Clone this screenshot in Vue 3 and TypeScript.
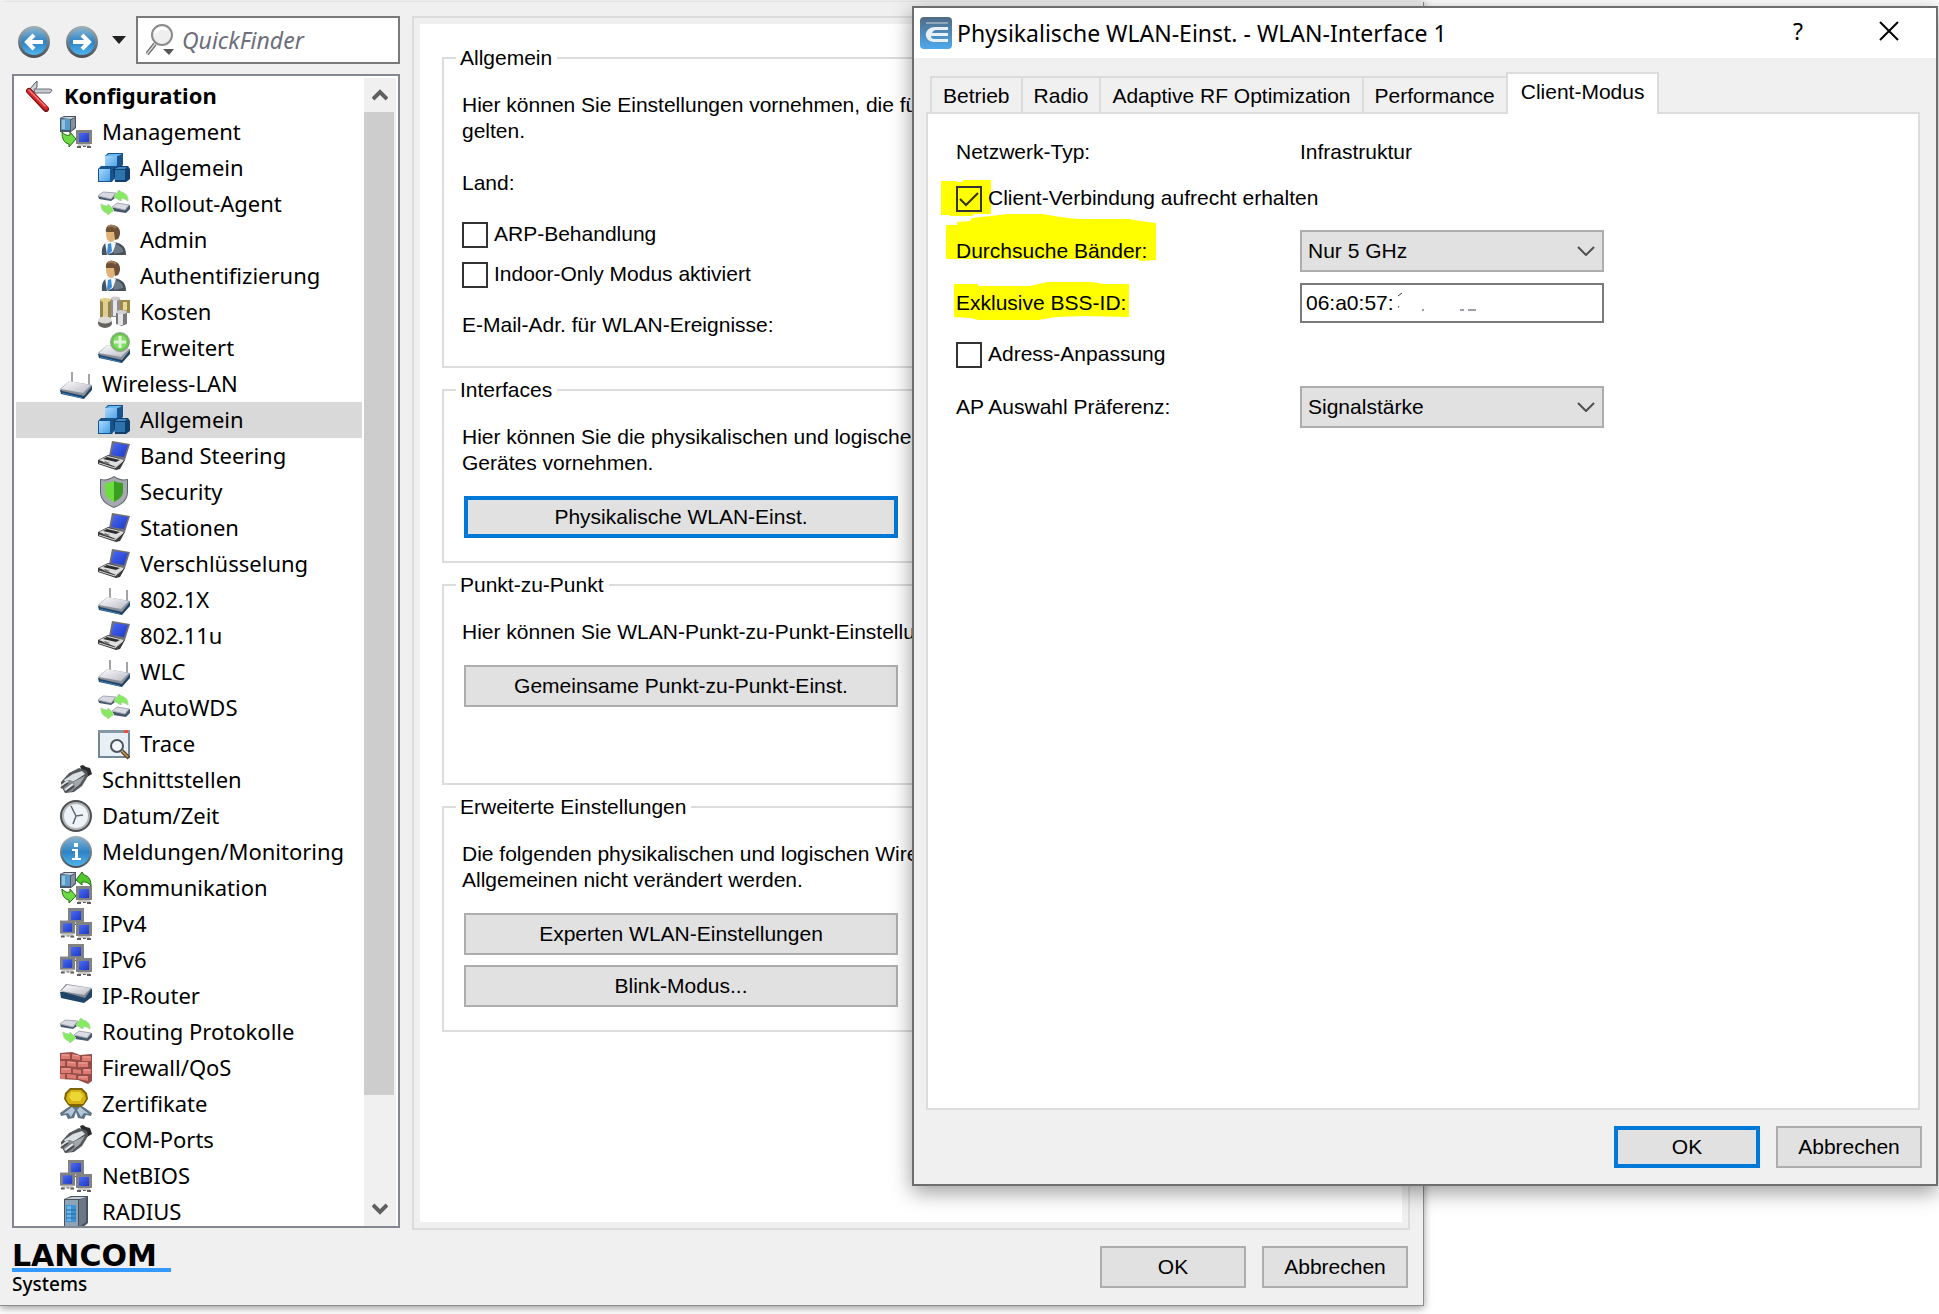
<script setup lang="ts">
import { ref } from 'vue'

interface TreeItem {
  label: string
  icon: string
  level: number
}

const items: TreeItem[] = [
  { label: 'Konfiguration', icon: 'knife', level: 0 },
  { label: 'Management', icon: 'management', level: 1 },
  { label: 'Allgemein', icon: 'cubes', level: 2 },
  { label: 'Rollout-Agent', icon: 'routing', level: 2 },
  { label: 'Admin', icon: 'person', level: 2 },
  { label: 'Authentifizierung', icon: 'person', level: 2 },
  { label: 'Kosten', icon: 'coins', level: 2 },
  { label: 'Erweitert', icon: 'extended', level: 2 },
  { label: 'Wireless-LAN', icon: 'wlan', level: 1 },
  { label: 'Allgemein', icon: 'cubes', level: 2 },
  { label: 'Band Steering', icon: 'laptop', level: 2 },
  { label: 'Security', icon: 'shield', level: 2 },
  { label: 'Stationen', icon: 'laptop', level: 2 },
  { label: 'Verschlüsselung', icon: 'laptop', level: 2 },
  { label: '802.1X', icon: 'wlan', level: 2 },
  { label: '802.11u', icon: 'laptop', level: 2 },
  { label: 'WLC', icon: 'wlan', level: 2 },
  { label: 'AutoWDS', icon: 'routing', level: 2 },
  { label: 'Trace', icon: 'trace', level: 2 },
  { label: 'Schnittstellen', icon: 'plug', level: 1 },
  { label: 'Datum/Zeit', icon: 'clock', level: 1 },
  { label: 'Meldungen/Monitoring', icon: 'info', level: 1 },
  { label: 'Kommunikation', icon: 'communication', level: 1 },
  { label: 'IPv4', icon: 'network', level: 1 },
  { label: 'IPv6', icon: 'network', level: 1 },
  { label: 'IP-Router', icon: 'router', level: 1 },
  { label: 'Routing Protokolle', icon: 'routing', level: 1 },
  { label: 'Firewall/QoS', icon: 'wall', level: 1 },
  { label: 'Zertifikate', icon: 'seal', level: 1 },
  { label: 'COM-Ports', icon: 'plug', level: 1 },
  { label: 'NetBIOS', icon: 'network', level: 1 },
  { label: 'RADIUS', icon: 'server', level: 1 },
]

const selected = ref(9)
const search = ref('')

const tabs = ['Betrieb', 'Radio', 'Adaptive RF Optimization', 'Performance', 'Client-Modus']
const activeTab = ref(4)

const arp = ref(false)
const indoor = ref(false)
const keepAlive = ref(true)
const adapt = ref(false)
const band = ref('Nur 5 GHz')
const bssid = ref('06:a0:57:')
const preference = ref('Signalstärke')
</script>

<template>
  <div class="desktop">
    <svg class="sprites" width="0" height="0" aria-hidden="true">
      <defs>
        <linearGradient id="gBlue" x1="0" y1="0" x2="0" y2="1">
          <stop offset="0" stop-color="#7fb0d2" /><stop offset=".5" stop-color="#2f83c4" /><stop offset="1" stop-color="#4fb4ee" />
        </linearGradient>
        <linearGradient id="gRim" x1="0" y1="0" x2="0" y2="1">
          <stop offset="0" stop-color="#9db0ba" /><stop offset="1" stop-color="#4a4f55" />
        </linearGradient>
        <linearGradient id="gCube" x1="0" y1="0" x2="1" y2="1">
          <stop offset="0" stop-color="#a8d9ff" /><stop offset="1" stop-color="#4a9fe4" />
        </linearGradient>
        <linearGradient id="gScreen" x1="0" y1="0" x2="1" y2="1">
          <stop offset="0" stop-color="#4a6cf2" /><stop offset="1" stop-color="#1e38c8" />
        </linearGradient>
        <linearGradient id="gMetal" x1="0" y1="0" x2="1" y2="1">
          <stop offset="0" stop-color="#ffffff" /><stop offset="1" stop-color="#b9b9c4" />
        </linearGradient>
        <linearGradient id="gLogo" x1="0" y1="0" x2="0" y2="1">
          <stop offset="0" stop-color="#4f6b84" /><stop offset="1" stop-color="#4fa9ee" />
        </linearGradient>
        <symbol id="i-knife" viewBox="0 0 32 32">
          <path d="M4 9 9 3l2-2v6L8 12z" fill="#cfd3d8" stroke="#55585e" />
          <path d="M8 9h16l2 1-2 3H9z" fill="#c6cad0" stroke="#6d7178" />
          <path d="M3 11 20 29" stroke="#7a1114" stroke-width="6" stroke-linecap="round" />
          <path d="M3 11 20 28" stroke="#d8272d" stroke-width="4" stroke-linecap="round" />
          <path d="M3 10 19 26" stroke="#f27c7c" stroke-width="1.500" stroke-linecap="round" />
        </symbol>
        <symbol id="p-tower" viewBox="0 0 16 16">
          <path d="M0 2 4 0h12v12l-5 4H0z" fill="#4b5565" />
          <path d="M1 3h9v11H1z" fill="#5a9cc8" /><path d="M2 4h3v9H2z" fill="#8fc1e0" />
          <path d="m1 2 4-1h10l-4 2z" fill="#c9d2da" /><path d="m11 4 4-2v9l-4 4z" fill="#8591a0" />
        </symbol>
        <symbol id="p-monitor" viewBox="0 0 16 18">
          <rect width="16" height="14" fill="#828282" /><rect x="3" y="3" width="10" height="9" fill="url(#gScreen)" />
          <path d="M2 14h12v2H2z" fill="#c8c8c8" /><path d="M1 16h4v2H1zM7 16h3v1H7zM11 16h4v2h-4z" fill="#5d5d5d" />
        </symbol>
        <symbol id="i-management" viewBox="0 0 32 32">
          <use href="#p-tower" width="16" height="16" />
          <path d="M2 16c3 3 5 4 8 3v-3l6 7-7 8v-3c-5-1-7-5-7-12z" fill="#6ddb45" stroke="#226c11" />
          <use href="#p-monitor" x="16" y="14" width="16" height="18" />
        </symbol>
        <symbol id="i-communication" viewBox="0 0 32 32">
          <use href="#p-tower" width="16" height="16" />
          <path d="m16 8 6-8 2 3c5 1 7 5 7 11-3-4-5-4-9-4v3z" fill="#51c62e" stroke="#226c11" />
          <path d="M2 17c3 3 5 4 8 3v-3l6 7-7 7v-3c-5-1-7-5-7-11z" fill="#6ddb45" stroke="#226c11" />
          <use href="#p-monitor" x="16" y="14" width="16" height="18" />
        </symbol>
        <symbol id="i-cubes" viewBox="0 0 32 32">
          <path d="m7 4 3-3h15v12l-4 4H7z" fill="#17548d" /><path d="M7 4h12v12H7z" fill="url(#gCube)" /><path d="m8 4 3-2h13l-4 2z" fill="#6cb6ee" />
          <path d="m0 17 3-3h14v12l-3 4H0z" fill="#17548d" /><path d="M1 17h11v12H1z" fill="url(#gCube)" />
          <path d="m15 17 3-3h12l2 3v10l-4 3H17z" fill="#123f6c" /><path d="M17 18h10v10H17z" fill="#2d73ae" /><path d="m17 17 3-2h9l-2 2z" fill="#3f87c4" />
        </symbol>
        <symbol id="i-routing" viewBox="0 0 32 32">
          <path d="m0 8 1 3 12 2 4-3V6z" fill="#47586c" /><path d="m0 8 5-4 13 1-5 6z" fill="#d9d9e1" stroke="#a5a9b2" />
          <path d="m14 20 1 3 13 2 4-4v-4z" fill="#47586c" /><path d="m14 19 5-4 12 2-4 5z" fill="#dcdce4" stroke="#a5a9b2" />
          <path d="m16 9 5-7 2 2c5 1 7 4 7 9-3-2-5-3-7-2v2z" fill="#84ea5f" stroke="#a5d896" />
          <path d="M3 16c3 2 5 2 7 2v-2l6 6-6 5-1-2c-4-1-6-4-6-9z" fill="#84ea5f" stroke="#a5d896" />
        </symbol>
        <symbol id="i-person" viewBox="0 0 32 32">
          <path d="M4 31c-1-8 2-13 8-14l8 2c6 2 8 6 8 12z" fill="#47525e" />
          <path d="M16 20c6 1 9 4 9 8l-9 2z" fill="#6e7a86" />
          <path d="m7 18 6-2 5 3-3 9-6 3z" fill="#f4f7fa" /><path d="m10 20 3-1 1 8-4 4-1-2z" fill="#3d8bd2" />
          <ellipse cx="13" cy="10" rx="5" ry="8" fill="#dfb377" /><path d="M8 8C7 2 12-1 18 2c5 2 5 9 2 13l-3 1-1-8c-4 0-6 0-8 0z" fill="#6d5036" />
          <path d="M10 3c3-2 6-1 8 1" stroke="#a07d58" stroke-width="2" fill="none" />
        </symbol>
        <symbol id="i-coins" viewBox="0 0 32 32">
          <path d="M2 3h11v22H2z" fill="#95854a" /><path d="M5 5h5v18H5z" fill="#ddcf93" /><ellipse cx="7.500" cy="4" rx="5.500" ry="2" fill="#e0cf85" />
          <path d="M22 4h10v13H22z" fill="#9d8a49" /><path d="M25 6h4v8h-4z" fill="#e6d89a" />
          <path d="M13 2h9v19h-9z" fill="#8f8f93" /><path d="M15 4h4v16h-4z" fill="#e7e7ea" /><ellipse cx="17.500" cy="2.500" rx="4.500" ry="2" fill="#cbcbcf" />
          <path d="M18 17h11v11l-5 2-6-2z" fill="#77777c" /><path d="M20 16h5v13h-5z" fill="#e4e4e7" /><ellipse cx="23.500" cy="16" rx="5.500" ry="2" fill="#d2d2d6" />
          <ellipse cx="7" cy="27" rx="7" ry="5" fill="#66635f" /><ellipse cx="7" cy="24" rx="7" ry="3.500" fill="#dedcd9" />
        </symbol>
        <symbol id="p-box" viewBox="0 0 32 18">
          <path d="m0 9 1 4 23 5 8-9V5z" fill="#1f4468" /><path d="m0 8 2 2 22 5 8-10V4L9 0z" fill="#8a9099" /><path d="M1 8 9 0l22 4-8 8z" fill="url(#gMetal)" />
          <path d="m2 12 20 5" stroke="#3f82bd" />
        </symbol>
        <symbol id="i-extended" viewBox="0 0 32 32">
          <use href="#p-box" y="13" width="32" height="18" />
          <circle cx="22" cy="10" r="9.500" fill="#6cc254" stroke="#94a591" /><circle cx="22" cy="10" r="7" fill="#83de66" /><path d="M22 4v12M16 10h12" stroke="#dff5d6" stroke-width="3" />
        </symbol>
        <symbol id="i-wlan" viewBox="0 0 32 32">
          <path d="M12 4v14M29 6v13" stroke="#a3a3a8" stroke-width="2" />
          <use href="#p-box" y="13" width="32" height="18" />
        </symbol>
        <symbol id="i-router" viewBox="0 0 32 32">
          <path d="m0 12 1 6 23 5 8-6V9z" fill="#1f4468" /><path d="m0 11 6-7 26 4-7 10z" fill="#858a92" /><path d="m1 11 6-6 24 3-7 7z" fill="url(#gMetal)" />
        </symbol>
        <symbol id="i-laptop" viewBox="0 0 32 32">
          <path d="m14 1 18 3-5 16-16-4z" fill="#6f6f74" /><path d="m16 3 14 2-4 12-13-2z" fill="url(#gScreen)" />
          <path d="m0 20 10-5 17 5-5 9-4 1-18-6z" fill="#3a3a3d" /><path d="m1 20 9-4 16 4-8 7z" fill="#dededf" /><path d="m9 17 13 3-4 2-13-3z" fill="#2d2d30" /><path d="m7 21 5 2-2 1-5-1z" fill="#777" /><path d="m1 23 16 5 8-7" fill="none" stroke="#d7d7d7" />
        </symbol>
        <symbol id="i-shield" viewBox="0 0 32 32">
          <path d="M2 3c6 1 9 0 14-3 5 3 8 4 14 3v13c0 8-6 13-14 16C8 29 2 24 2 16z" fill="#5c6166" />
          <path d="M3 4c6 1 8 0 13-3 5 3 7 4 13 3v12c0 7-5 12-13 15C8 28 3 23 3 16z" fill="#a4aaaf" />
          <path d="M7 7c4 0 6-1 9-2v21c-6-3-9-6-9-11z" fill="#6bdd3c" /><path d="M25 7c-4 0-6-1-9-2v21c6-3 9-6 9-11z" fill="#3b9c22" />
        </symbol>
        <symbol id="i-trace" viewBox="0 0 32 32">
          <rect x="1" y="3" width="30" height="26" fill="#e9f0f5" stroke="#718798" stroke-width="2" /><path d="M0 2h32v3H0z" fill="#8397a6" /><path d="M26 2h4v3h-4z" fill="#e4523a" />
          <circle cx="19" cy="18" r="6" fill="#f4f8fb" stroke="#4a555e" stroke-width="2" /><path d="m24 23 7 7" stroke="#5e452a" stroke-width="4" /><path d="m24 23 6 6" stroke="#c39a5d" stroke-width="1.500" />
        </symbol>
        <symbol id="i-plug" viewBox="0 0 32 32">
          <path d="m20 2 3-1 3 2 4 1 2 6-5 3-5-5z" fill="#2b2b2b" />
          <path d="m1 18 8-9 10-5 8 3 1 5-6 10-8 6-9 1-4-7z" fill="#55595d" /><path d="m4 16 9-6 9-3 3 3-9 6-9 4z" fill="#dde0e2" /><path d="m13 18 12-6-5 8-6 5z" fill="#a3a8ad" />
          <ellipse cx="9" cy="22" rx="6" ry="6" fill="#83898f" /><path d="m1 22 7-5M5 26l8-6" stroke="#e3e6e8" stroke-width="2" /><path d="m1 24 7-5M6 28l8-6" stroke="#4a4d50" stroke-width="2" />
        </symbol>
        <symbol id="i-clock" viewBox="0 0 32 32">
          <circle cx="16" cy="16" r="15" fill="#b3b6b9" stroke="#4c4f52" stroke-width="2" /><circle cx="16" cy="16" r="12" fill="#eef3f8" />
          <path d="m11 6 5 10 7-1M16 16l-3 8" stroke="#5f656b" stroke-width="1.500" fill="none" />
        </symbol>
        <symbol id="i-info" viewBox="0 0 32 32">
          <circle cx="16" cy="16" r="16" fill="url(#gRim)" /><circle cx="16" cy="16" r="14" fill="url(#gBlue)" />
          <path d="M14 7h4v4h-4zM12 13h6v9h3v2h-9v-2h3v-7h-3z" fill="#fff" />
        </symbol>
        <symbol id="i-network" viewBox="0 0 32 32">
          <use href="#p-monitor" x="8" y="0" width="16" height="18" /><use href="#p-monitor" x="0" y="12" width="15" height="18" /><use href="#p-monitor" x="16" y="14" width="16" height="18" />
        </symbol>
        <symbol id="i-wall" viewBox="0 0 32 32">
          <path d="m0 1 12-1 8 3 12-1v27l-4 3-10-4-18-1z" fill="#944d47" />
          <path d="M1 2h9v5H1zM12 2l8 2v4l-8-1zM22 4h9v5h-9zM0 9h5v5H0zM7 9l9 1v5l-9-1zM18 10h10v5H18zM1 16h10v5H1zM13 17l8 1v4l-8-1zM23 17h8v5h-8zM0 22h5v5H0zM7 22l9 1v4l-9-1zM18 24h10v5l-10-2z" fill="#dd7a71" />
          <path d="M2 3h7M13 3l6 1M23 5h7M8 10l7 1M19 11h8M2 17h8M24 18h6M19 25h8" stroke="#f1a59c" />
        </symbol>
        <symbol id="i-seal" viewBox="0 0 32 32">
          <path d="m12 17-5 3-7 5 1 3 5-1 2 4 6-1 2-6 2 6 6 1 2-4 5 1 1-3-7-5-5-3z" fill="#5f7486" /><path d="m12 19-9 7 5-1 3 4 4-7zM20 19l9 7-5-1-3 4-4-7z" fill="#b5c8da" />
          <path d="M10 0h12l5 5 1 6-4 6-3 2H11l-3-2-4-6 1-6z" fill="#7b6505" /><path d="M11 2h10l4 4 1 5-3 5H9l-3-5 1-5z" fill="#d8b315" /><path d="M11 4h9l3 4-3 5h-8L9 9z" fill="#ecd635" />
        </symbol>
        <symbol id="i-server" viewBox="0 0 32 32">
          <path d="m4 3 7-3h17v27l-6 5H4z" fill="#48525f" /><path d="M5 4h13v27H5z" fill="#8ea4b6" /><path d="M6 9h10v17H6z" fill="#3b93d4" /><path d="M7 10h4v15H7z" fill="#6cb6e8" /><path d="M6 14h10M6 18h10M6 22h10" stroke="#286a9e" />
          <path d="m5 3 7-2h15l-7 2z" fill="#c3ccd5" /><path d="m19 4 7-3v25l-7 5z" fill="#6b7786" />
        </symbol>
      </defs>
    </svg>

    <main class="window">
      <div class="body">
        <aside class="side">
          <div class="toolbar">
            <button class="nav" type="button" aria-label="Zurück">
              <svg viewBox="0 0 32 32"><circle cx="16" cy="16" r="16" fill="url(#gRim)" /><circle cx="16" cy="16" r="13" fill="url(#gBlue)" /><path d="M25 16H9M16 9l-7 7 7 7" fill="none" stroke="#fff" stroke-width="4" /></svg>
            </button>
            <button class="nav" type="button" aria-label="Vor">
              <svg viewBox="0 0 32 32"><circle cx="16" cy="16" r="16" fill="url(#gRim)" /><circle cx="16" cy="16" r="13" fill="url(#gBlue)" /><path d="M7 16h16M16 9l7 7-7 7" fill="none" stroke="#fff" stroke-width="4" /></svg>
            </button>
            <button class="more" type="button" aria-label="Verlauf">
              <svg viewBox="0 0 14 8"><path d="M0 0h14L7 8z" fill="#222" /></svg>
            </button>
            <div class="search">
              <svg viewBox="0 0 28 32"><path d="M9 20 1 30" stroke="#6a6a6a" stroke-width="4" /><path d="M9 20 1 30" stroke="#d8d8d8" stroke-width="1.500" /><circle cx="16" cy="11" r="10" fill="#efefef" stroke="#8b8b8b" stroke-width="2" /><path d="M9 9c2-5 8-6 12-3" stroke="#fff" stroke-width="3" fill="none" /><path d="M17 25h11l-5 6z" fill="#555" /></svg>
              <input v-model="search" type="text" placeholder="QuickFinder" aria-label="QuickFinder">
            </div>
          </div>
          <div class="tree">
            <ul>
              <li v-for="(item, i) in items" :key="i" :class="['row', 'level' + item.level, { selected: i === selected }]" @click="selected = i">
                <svg class="icon"><use :href="'#i-' + item.icon" /></svg>
                <span>{{ item.label }}</span>
              </li>
            </ul>
            <div class="scroll">
              <svg class="arrow" viewBox="0 0 16 12"><path d="m1 10 7-7 7 7" fill="none" stroke="#606060" stroke-width="4" /></svg>
              <div class="track"><div class="thumb"></div></div>
              <svg class="arrow" viewBox="0 0 16 12"><path d="m1 2 7 7 7-7" fill="none" stroke="#606060" stroke-width="4" /></svg>
            </div>
          </div>
        </aside>

        <section class="pane">
          <fieldset class="general">
            <legend>Allgemein</legend>
            <p>Hier können Sie Einstellungen vornehmen, die für<br>gelten.</p>
            <p class="land">Land:</p>
            <label class="check"><input v-model="arp" type="checkbox"><span>ARP-Behandlung</span></label>
            <label class="check"><input v-model="indoor" type="checkbox"><span>Indoor-Only Modus aktiviert</span></label>
            <p class="mail">E-Mail-Adr. für WLAN-Ereignisse:</p>
          </fieldset>
          <fieldset>
            <legend>Interfaces</legend>
            <p>Hier können Sie die physikalischen und logischen<br>Gerätes vornehmen.</p>
            <button class="btn wide primary" type="button">Physikalische WLAN-Einst.</button>
          </fieldset>
          <fieldset class="p2p">
            <legend>Punkt-zu-Punkt</legend>
            <p>Hier können Sie WLAN-Punkt-zu-Punkt-Einstellungen</p>
            <button class="btn wide" type="button">Gemeinsame Punkt-zu-Punkt-Einst.</button>
          </fieldset>
          <fieldset>
            <legend>Erweiterte Einstellungen</legend>
            <p>Die folgenden physikalischen und logischen Wireless<br>Allgemeinen nicht verändert werden.</p>
            <button class="btn wide" type="button">Experten WLAN-Einstellungen</button>
            <button class="btn wide" type="button">Blink-Modus...</button>
          </fieldset>
        </section>
      </div>

      <footer class="footer">
        <div class="brand">
          <strong>LANCOM</strong>
          <span>Systems</span>
        </div>
        <div class="actions">
          <button class="btn" type="button">OK</button>
          <button class="btn" type="button">Abbrechen</button>
        </div>
      </footer>
    </main>

    <div class="dialog" role="dialog" aria-labelledby="dialog-title">
      <header class="titlebar">
        <svg class="app" viewBox="0 0 32 32"><rect width="32" height="32" rx="4" fill="url(#gLogo)" /><path d="M6 6h22" stroke="#8fa5b8" stroke-width="2" /><path d="M28 10H15c-5 0-8 3-9 6-1 5 3 9 8 9h14v-3H14c-2 0-3-1-3-3h17v-3H12c1-2 2-3 4-3h12z" fill="#e8f1f8" /></svg>
        <h1 id="dialog-title">Physikalische WLAN-Einst. - WLAN-Interface 1</h1>
        <button class="help" type="button">?</button>
        <button class="close" type="button" aria-label="Schließen">
          <svg viewBox="0 0 20 20"><path d="m1 1 18 18M19 1 1 19" stroke="#000" stroke-width="2" /></svg>
        </button>
      </header>
      <div class="tabs" role="tablist">
        <button v-for="(tab, i) in tabs" :key="tab" :class="['tab', { active: i === activeTab }]" type="button" role="tab" :aria-selected="i === activeTab" @click="activeTab = i">{{ tab }}</button>
      </div>
      <div class="sheet">
        <div class="line first"><span>Netzwerk-Typ:</span><span>Infrastruktur</span></div>
        <div class="line">
          <label class="check marked">
            <svg class="mark mark-check" viewBox="0 0 50 37"><path d="M0 1h16l1 1h4l1-2h28v34H33l-2 2H9v-1H0z" fill="#ff0" /></svg>
            <input v-model="keepAlive" type="checkbox"><span>Client-Verbindung aufrecht erhalten</span>
          </label>
        </div>
        <div class="line">
          <label class="marked" for="band">
            <svg class="mark mark-band" viewBox="0 0 210 48"><path d="M0 11h11V8l13-1 2-3 36-4h34l18 3 18 2h51l11 2 16 2v37l-16 1-2-2H0z" fill="#ff0" /></svg>
            <span>Durchsuche Bänder:</span>
          </label>
          <div class="combo">
            <select id="band" v-model="band"><option>Nur 5 GHz</option></select>
            <svg viewBox="0 0 18 10"><path d="m1 1 8 8 8-8" fill="none" stroke="#505050" stroke-width="2" /></svg>
          </div>
        </div>
        <div class="line">
          <label class="marked" for="bssid">
            <svg class="mark mark-bss" viewBox="0 0 175 38"><path d="M0 2h23l2 2h51l17-4h45l12 2h25v33l-44-1-29 1-18 3H24l-7-2-17-1z" fill="#ff0" /></svg>
            <span>Exklusive BSS-ID:</span>
          </label>
          <div class="field">
            <input id="bssid" v-model="bssid" type="text">
            <svg viewBox="0 0 90 20"><path d="m0 4 4-3M1 14l-2 3M24 18h2M62 18h4M70 18h8" stroke="#3a3a50" fill="none" /></svg>
          </div>
        </div>
        <div class="line"><label class="check"><input v-model="adapt" type="checkbox"><span>Adress-Anpassung</span></label></div>
        <div class="line">
          <label for="preference">AP Auswahl Präferenz:</label>
          <div class="combo">
            <select id="preference" v-model="preference"><option>Signalstärke</option></select>
            <svg viewBox="0 0 18 10"><path d="m1 1 8 8 8-8" fill="none" stroke="#505050" stroke-width="2" /></svg>
          </div>
        </div>
      </div>
      <div class="actions">
        <button class="btn primary" type="button">OK</button>
        <button class="btn" type="button">Abbrechen</button>
      </div>
    </div>
  </div>
</template>

<style>
body {
  margin: 0;
  background: #fff;
}
</style>

<style scoped>
* {
  box-sizing: border-box;
}

.desktop {
  position: relative;
  height: 100vh;
  min-height: 800px;
  padding: 2px 515px 8px 0;
  overflow: hidden;
  color: #000;
  font: 21px/26px "Liberation Sans", Arial, sans-serif;
}

.sprites {
  position: absolute;
}

button,
input,
select {
  font: inherit;
  color: inherit;
}

svg {
  display: block;
}

.window {
  display: flex;
  flex-direction: column;
  height: 100%;
  background: #f0f0f0;
  border-right: 1px solid #8c8c8c;
  border-bottom: 1px solid #8c8c8c;
  box-shadow: 0 2px 8px rgba(0, 0, 0, 0.4);
}

.body {
  display: flex;
  flex: 1;
  gap: 12px;
  min-height: 0;
  padding: 14px 13px 0 12px;
}

.side {
  display: flex;
  flex: none;
  flex-direction: column;
  gap: 10px;
  width: 388px;
  padding-bottom: 2px;
  font: 22px/36px "Noto Sans", "Open Sans", sans-serif;
}

.toolbar {
  display: flex;
  align-items: center;
  height: 48px;
  padding-left: 6px;
}

.nav,
.more {
  padding: 0;
  border: 0;
  background: none;
}

.nav {
  width: 32px;
  height: 32px;
  margin: 4px 16px 0 0;
}

.more {
  width: 14px;
  margin-right: 10px;
  margin-left: -2px;
}

.search {
  display: flex;
  flex: 1;
  align-items: center;
  gap: 8px;
  height: 48px;
  padding-left: 8px;
  background: #fff;
  border: 2px solid #7a7a7a;
}

.search svg {
  flex: none;
  width: 28px;
  height: 32px;
}

.search input {
  width: 100%;
  min-width: 0;
  padding: 0;
  border: 0;
  outline: 0;
  background: none;
  font-size: 23px;
  font-style: italic;
}

.search input::placeholder {
  color: #6d6d7c;
  opacity: 1;
}

.tree {
  display: flex;
  flex: 1;
  min-height: 0;
  padding: 2px 2px 0;
  overflow: hidden;
  background: #fff;
  border: 2px solid #828790;
}

.tree ul {
  flex: 1;
  margin: 0;
  padding: 0;
  overflow: hidden;
  list-style: none;
}

.row {
  display: flex;
  align-items: center;
  gap: 10px;
  height: 36px;
  margin-right: 2px;
  white-space: nowrap;
}

.row span {
  padding-bottom: 2px;
  line-height: 26px;
}

.row.selected {
  background: #d9d9d9;
}

.icon {
  flex: none;
  width: 32px;
  height: 32px;
}

.level0 {
  gap: 6px;
  padding-left: 10px;
  font-weight: bold;
}

.level1 {
  padding-left: 44px;
}

.level2 {
  padding-left: 82px;
}

.scroll {
  display: flex;
  flex-direction: column;
  align-items: center;
  width: 32px;
  background: #f0f0f0;
}

.arrow {
  width: 16px;
  height: 12px;
  margin: 11px 0;
}

.track {
  flex: 1;
  width: 100%;
}

.thumb {
  width: 30px;
  height: 91%;
  background: #cdcdcd;
}

.pane {
  flex: 1;
  min-width: 0;
  padding: 26px 20px 0 22px;
  overflow: hidden;
  background: #fff;
  border: 2px solid #dcdcdc;
  outline: 6px solid #f0f0f0;
  outline-offset: -8px;
}

fieldset {
  min-width: 0;
  margin: 0 0 8px 6px;
  padding: 20px 20px 23px 18px;
  border: 2px solid #dcdcdc;
}

legend {
  margin-left: -6px;
  padding: 0 5px 0 4px;
  line-height: 28px;
}

p {
  margin: 0;
  white-space: nowrap;
}

p + .btn {
  margin-top: 20px;
}

.land {
  margin: 26px 0;
}

.general {
  padding-bottom: 28px;
}

.p2p {
  padding-bottom: 76px;
}

.check {
  display: flex;
  align-items: center;
  gap: 6px;
  width: fit-content;
}

.check span {
  padding-bottom: 2px;
}

.general .check {
  height: 26px;
  margin-bottom: 14px;
}

.mail {
  margin-top: 24px;
}

input[type="checkbox"] {
  flex: none;
  width: 26px;
  height: 26px;
  margin: 0;
  appearance: none;
  border: 2px solid #333;
}

input[type="checkbox"]:checked {
  background: url("data:image/svg+xml,%3Csvg xmlns='http://www.w3.org/2000/svg' viewBox='0 0 22 22'%3E%3Cpath d='M2 11l6 6L20 5' fill='none' stroke='%23333300' stroke-width='2'/%3E%3C/svg%3E") center / 22px no-repeat;
}

.btn {
  display: block;
  width: 146px;
  height: 42px;
  padding: 0;
  background: #e1e1e1;
  border: 2px solid #adadad;
}

.btn.wide {
  width: 434px;
  margin-left: 2px;
}

.btn.primary {
  border: 4px solid #0078d7;
}

.btn + .btn.wide {
  margin-top: 10px;
}

.actions {
  display: flex;
  gap: 16px;
}

.footer {
  display: flex;
  justify-content: space-between;
  height: 75px;
  padding: 14px 15px 0 12px;
}

.footer .actions {
  padding-top: 2px;
}

.brand {
  display: flex;
  flex-direction: column;
}

.brand strong {
  width: 159px;
  border-bottom: 4px solid #3399ff;
  font: bold 30px/24px "DejaVu Sans", sans-serif;
}

.brand span {
  font: 500 19px/24px "Noto Sans", sans-serif;
}

.dialog {
  position: absolute;
  top: 6px;
  right: 1px;
  bottom: 128px;
  left: 912px;
  display: flex;
  flex-direction: column;
  background: #f0f0f0;
  border: 2px solid #6e6e6e;
  box-shadow: 0 6px 20px rgba(0, 0, 0, 0.4);
}

.titlebar {
  display: flex;
  align-items: center;
  height: 50px;
  padding: 0 37px 0 6px;
  background: #fff;
  font: 23px/32px "Noto Sans", "Open Sans", sans-serif;
}

.app {
  width: 32px;
  height: 32px;
}

h1 {
  flex: 1;
  margin: 0;
  padding-left: 5px;
  font: inherit;
  white-space: nowrap;
}

.help,
.close {
  padding: 0 0 4px;
  border: 0;
  background: none;
}

.help {
  margin-right: 76px;
}

.close svg {
  width: 20px;
  height: 20px;
}

.tabs {
  display: flex;
  align-items: flex-end;
  height: 56px;
  padding-left: 16px;
}

.tab {
  height: 38px;
  padding: 0 11px;
  background: #f0f0f0;
  border: 2px solid #dcdcdc;
  border-right: 0;
  border-bottom: 0;
  white-space: nowrap;
}

.tab.active {
  z-index: 1;
  height: 42px;
  padding: 0 13px 4px;
  background: #fff;
  border-right: 2px solid #dcdcdc;
}

.sheet {
  flex: 1;
  margin: -2px 16px 0 12px;
  padding: 17px 28px 0;
  background: #fff;
  border: 2px solid #dcdcdc;
}

.line {
  display: grid;
  grid-template-columns: 344px 304px;
  align-items: center;
  height: 52px;
  white-space: nowrap;
}

.line.first {
  height: 42px;
}

.marked {
  position: relative;
}

.marked > span,
.marked > input {
  position: relative;
}

.mark {
  position: absolute;
}

.mark-check {
  top: -5px;
  left: -15px;
  width: 50px;
}

.mark-band {
  top: -24px;
  left: -10px;
  width: 210px;
}

.mark-bss {
  top: -8px;
  left: -2px;
  width: 175px;
}

.combo,
.field {
  position: relative;
}

.combo select {
  display: block;
  width: 100%;
  height: 42px;
  padding: 0 6px;
  appearance: none;
  background: #e1e1e1;
  border: 2px solid #adadad;
  border-radius: 0;
}

.combo svg {
  position: absolute;
  top: 16px;
  right: 9px;
  width: 18px;
  height: 10px;
}

.field input {
  display: block;
  width: 100%;
  height: 40px;
  padding: 0 4px;
  border: 2px solid #7a7a7a;
}

.field svg {
  position: absolute;
  top: 9px;
  left: 98px;
  width: 90px;
  height: 20px;
}

.dialog > .actions {
  justify-content: flex-end;
  padding: 16px 14px;
}
</style>
